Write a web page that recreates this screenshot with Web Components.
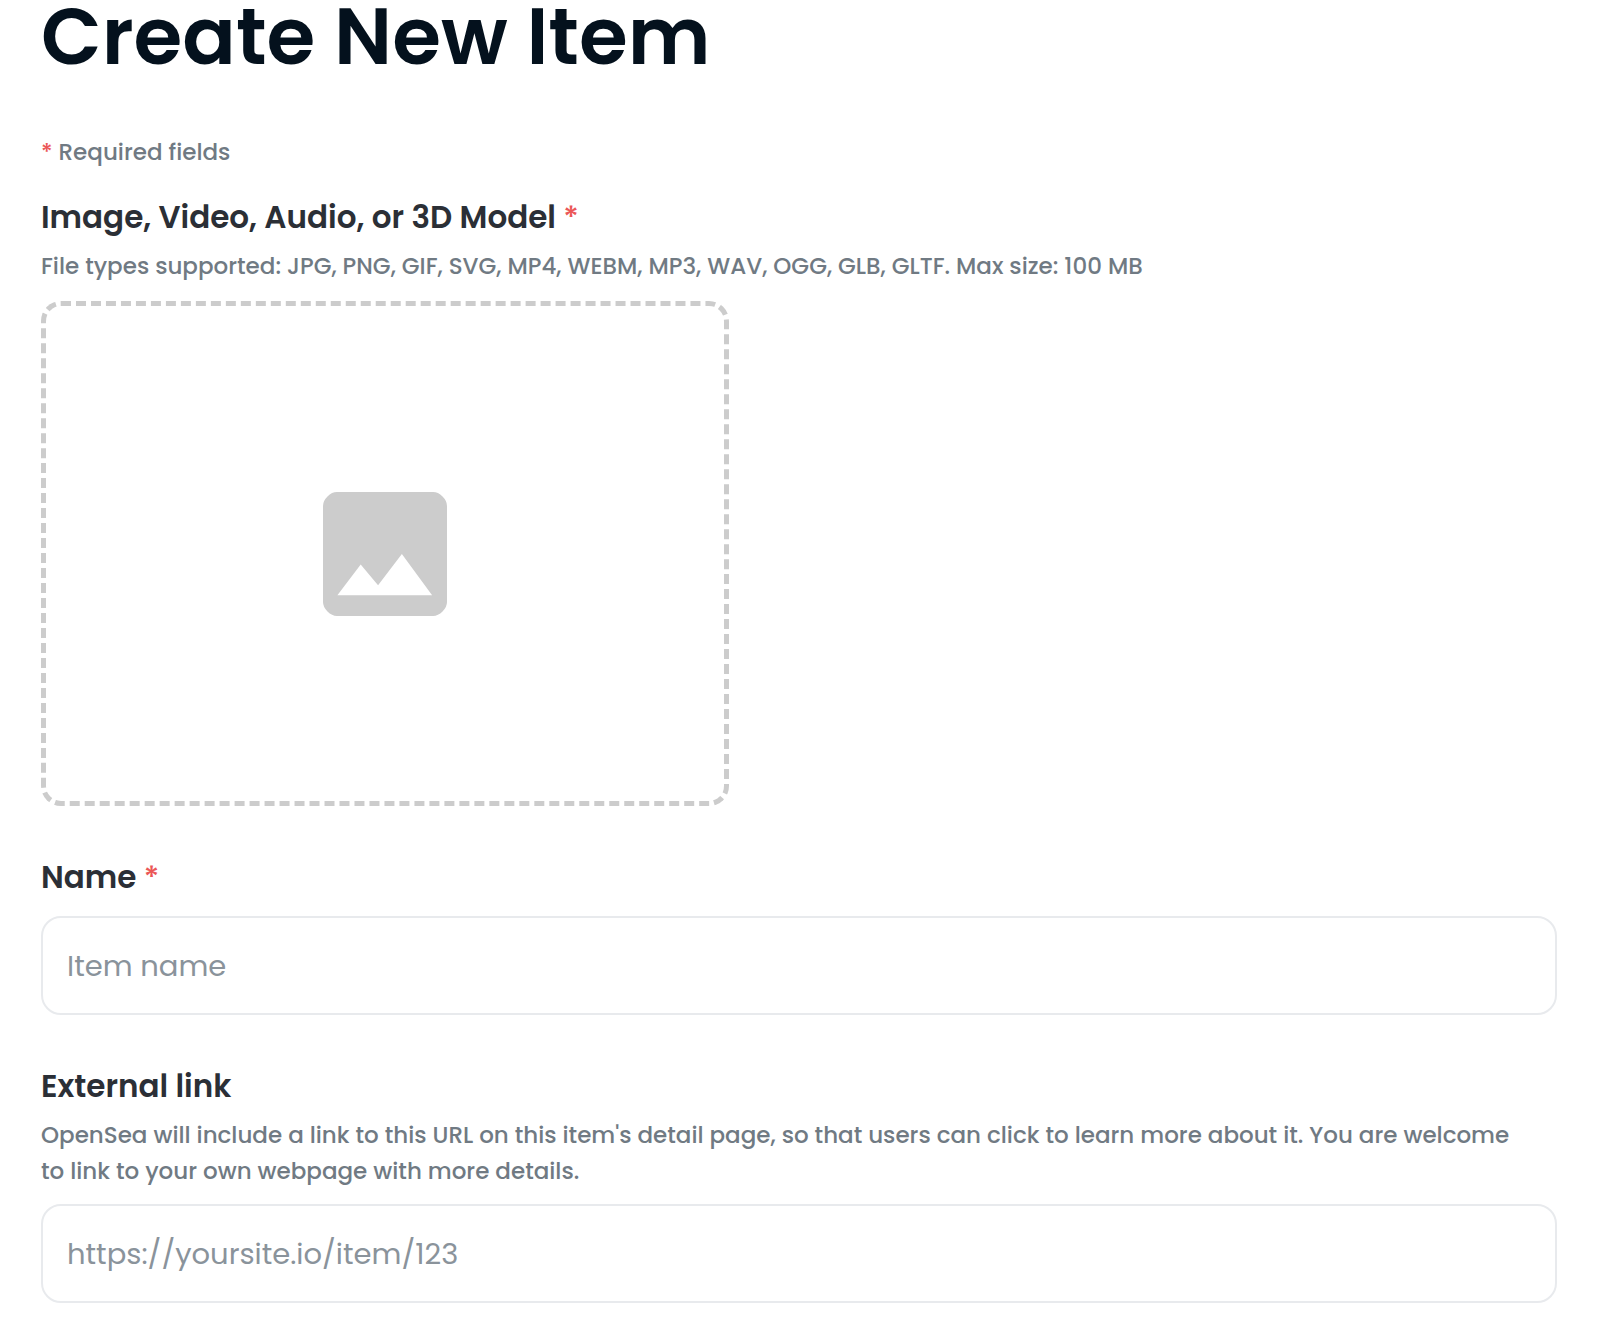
<!DOCTYPE html>
<html lang="en">
<head>
<meta charset="utf-8">
<title>Create New Item</title>
<style>
  body {
    margin: 0;
    background: #fff;
    font-family: Poppins, Inter, "Open Sans", sans-serif;
    font-weight: 500;
    --ink: #04111d;
    --label: #2b2f36;
    --muted: #707a83;
    --placeholder: #8a939b;
    --line: #e8eaed;
    --drop: #cccccc;
    --required: #eb5757;
  }
</style>
</head>
<body>
<create-item-page>
  <media-field label="Image, Video, Audio, or 3D Model" required>File types supported: JPG, PNG, GIF, SVG, MP4, WEBM, MP3, WAV, OGG, GLB, GLTF. Max size: 100 MB</media-field>
  <text-field label="Name" placeholder="Item name" required></text-field>
  <text-field label="External link" type="url" placeholder="https://yoursite.io/item/123">OpenSea will include a link to this URL on this item's detail page, so that users can click to learn more about it. You are welcome to link to your own webpage with more details.</text-field>
</create-item-page>

<script>
const fieldStyles = `
  :host { display: flex; flex-direction: column; }
  .label { font-size: 31px; line-height: 48px; font-weight: 600; color: var(--label); }
  .star { color: var(--required); font-weight: 500; }
  .hint { margin: 7px 0 0; padding-right: 24px; font-size: 23px; line-height: 36px; color: var(--muted); }
`;

function star(el) {
  return el.hasAttribute('required') ? ' <span class="star">*</span>' : '';
}

function hint(el) {
  return el.textContent.trim() ? '<p class="hint" id="hint"><slot></slot></p>' : '';
}

class CreateItemPage extends HTMLElement {
  connectedCallback() {
    this.attachShadow({ mode: 'open' }).innerHTML = `
      <style>
        :host { display: block; padding: 0 45px 20px 41px; }
        h1 { margin: 0; font-size: 79px; line-height: 74px; font-weight: 600; color: var(--ink); }
        .note { margin: 60px 0 23px; font-size: 23px; line-height: 36px; color: var(--muted); }
        .note span { color: var(--required); }
        form { display: flex; flex-direction: column; gap: 47px; }
      </style>
      <main>
        <h1>Create New Item</h1>
        <p class="note"><span>*</span> Required fields</p>
        <form><slot></slot></form>
      </main>`;
  }
}

class MediaField extends HTMLElement {
  connectedCallback() {
    this.attachShadow({ mode: 'open' }).innerHTML = `
      <style>
        ${fieldStyles}
        .drop {
          display: flex; align-items: center; justify-content: center;
          box-sizing: border-box; width: 100%; max-width: 688px; aspect-ratio: 688 / 505;
          margin-top: 17px; border: 5px dashed var(--drop); border-radius: 20px; cursor: pointer;
        }
        svg { width: 124px; height: 124px; fill: var(--drop); }
        input {
          position: absolute; width: 1px; height: 1px; margin: 0; opacity: 0;
        }
      </style>
      <label class="label" for="file">${this.getAttribute('label')}${star(this)}</label>
      ${hint(this)}
      <label class="drop" for="file">
        <input id="file" type="file" aria-describedby="hint">
        <svg viewBox="0 0 125 125" aria-hidden="true">
          <path fill-rule="evenodd" d="M14 0H111Q116 0 120.500 4.500T125 14V111Q125 116 120.500 120.500T111 125H14Q9 125 4.500 120.500T0 111V14Q0 9 4.500 4.500T14 0ZM14.500 104H110L79.500 62.500L55.500 94L38 73Z"/>
        </svg>
      </label>`;
  }
}

class TextField extends HTMLElement {
  connectedCallback() {
    this.attachShadow({ mode: 'open' }).innerHTML = `
      <style>
        ${fieldStyles}
        input {
          box-sizing: border-box; width: 100%; margin: 15px 0 0; padding: 25px 24px 23px;
          border: 2px solid var(--line); border-radius: 20px; background: #fff; color: var(--ink);
          font-family: inherit; font-size: 29px; line-height: 48px; font-weight: 400; height: 99px;
        }
        input::placeholder { color: var(--placeholder); opacity: 1; }
      </style>
      <label class="label" for="control">${this.getAttribute('label')}${star(this)}</label>
      ${hint(this)}
      <input id="control" type="${this.getAttribute('type') || 'text'}" placeholder="${this.getAttribute('placeholder')}">`;
  }
}

customElements.define('create-item-page', CreateItemPage);
customElements.define('media-field', MediaField);
customElements.define('text-field', TextField);
</script>
</body>
</html>
